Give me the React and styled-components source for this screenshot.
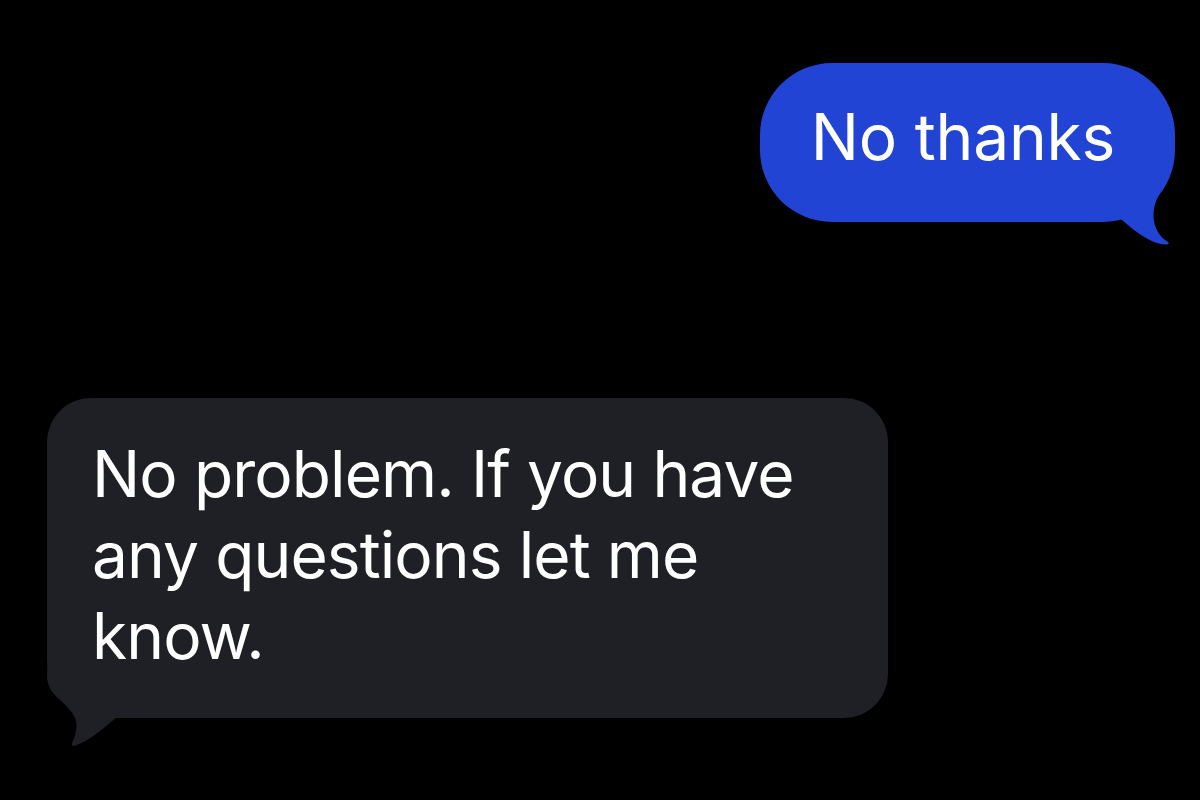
import React from 'react';
import styled, { createGlobalStyle } from 'styled-components';

const GlobalStyle = createGlobalStyle`
  html, body {
    margin: 0;
    padding: 0;
    background: #000;
  }
  body {
    font-family: Inter, "Noto Sans", "Liberation Sans", sans-serif;
    -webkit-font-smoothing: antialiased;
  }
`;

const Thread = styled.div`
  width: 1200px;
  height: 800px;
  box-sizing: border-box;
  padding: 63px 25px 0 47px;
  display: flex;
  flex-direction: column;
  gap: 176px;
  overflow: hidden;
`;

const Row = styled.div`
  display: flex;
  justify-content: ${(p) => (p.$outgoing ? 'flex-end' : 'flex-start')};
`;

const Bubble = styled.div`
  position: relative;
  box-sizing: border-box;
  color: #fff;
  font-size: 64px;
  line-height: 81px;
  font-weight: 400;
  background: ${(p) => p.$color};
`;

const SentBubble = styled(Bubble)`
  height: 159px;
  padding: 33px 60px 0 51px;
  border-radius: 72px;
  white-space: nowrap;
  letter-spacing: -0.2px;
`;

const ReceivedBubble = styled(Bubble)`
  width: 841px;
  padding: 35px 60px 42px 45px;
  border-radius: 44px;
  border-bottom-left-radius: 60px;
  letter-spacing: -0.9px;
`;

const Tail = styled.svg`
  position: absolute;
  display: block;
  overflow: visible;
`;

const SentTail = styled(Tail)`
  right: -3px;
  bottom: -25px;
`;

const ReceivedTail = styled(Tail)`
  left: -7px;
  bottom: -29px;
`;

const BLUE = '#2244d4';
const GRAY = '#1f1f26';

export default function App() {
  return (
    <>
      <GlobalStyle />
      <Thread>
        <Row $outgoing>
          <SentBubble $color={BLUE}>
            No thanks
            <SentTail width="68" height="67" viewBox="0 0 68 67">
              <path
                fill={BLUE}
                d="M0 0 H55 L48 17 C43 26 42 38 46 48 C49 55 53 59 58 62 C59.5 63 58.5 64.8 56 64.6 C42 64 28 54 12 40 L0 30 Z"
              />
            </SentTail>
          </SentBubble>
        </Row>
        <Row>
          <ReceivedBubble $color={GRAY}>
            No problem. If you have any questions let me know.
            <ReceivedTail width="80" height="67" viewBox="0 0 80 67">
              <path
                fill={GRAY}
                d="M80 -20 L7.5 -20 L7 -2 C8 8 14 15 20 20 C26 26 32 31 35 38 C38 45 36 55 32 63 C31 65.5 33 66.5 35 65.8 C50 60 62 50 78 36 Z"
              />
            </ReceivedTail>
          </ReceivedBubble>
        </Row>
      </Thread>
    </>
  );
}
